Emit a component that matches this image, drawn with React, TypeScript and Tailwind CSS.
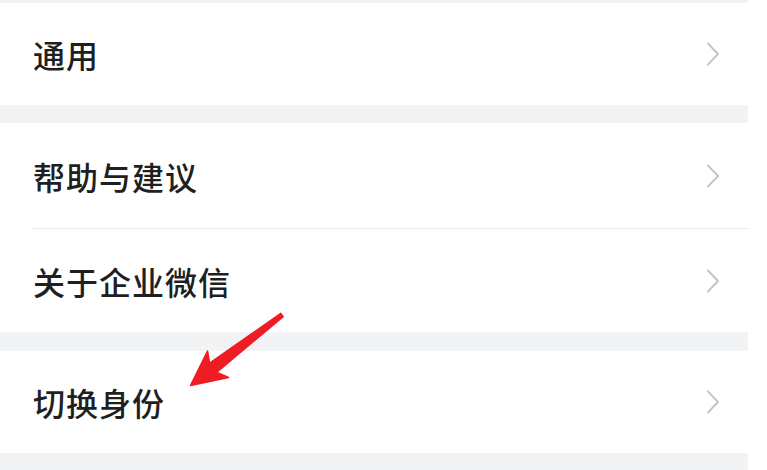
import React from "react";

const font = { fontFamily: '"Noto Sans CJK SC", "Noto Sans", sans-serif' };

function Chevron() {
  return (
    <svg width="14" height="24" viewBox="0 0 14 24" fill="none" className="shrink-0">
      <path d="M2 1.5 L12 12 L2 22.5" stroke="#c6c6c6" strokeWidth="2" strokeLinecap="round" strokeLinejoin="round" />
    </svg>
  );
}

function Row({ label, height, divider }: { label: string; height: string; divider?: boolean }) {
  return (
    <div className={`relative flex items-center justify-between bg-white pl-[33px] pr-[28px] ${height}`}>
      <span className="text-[32px] font-medium leading-none text-[#1f1f1f] tracking-[1px]">{label}</span>
      <Chevron />
      {divider && <div className="absolute bottom-0 left-[32px] right-0 h-px bg-[#ebebeb]" />}
    </div>
  );
}

function Gap({ height }: { height: string }) {
  return <div className={`bg-[#f2f3f5] ${height}`} />;
}

export default function App() {
  return (
    <div className="relative h-[470px] w-[767px] overflow-hidden bg-white" style={font}>
      <div className="flex w-[748px] flex-col">
        <Gap height="h-[3px]" />
        <Row label="通用" height="h-[102px]" />
        <Gap height="h-[18px]" />
        <Row label="帮助与建议" height="h-[106px]" divider />
        <Row label="关于企业微信" height="h-[103px]" />
        <Gap height="h-[19px]" />
        <Row label="切换身份" height="h-[102px]" />
        <Gap height="h-[17px]" />
      </div>
      <svg className="pointer-events-none absolute left-0 top-0" width="767" height="470" viewBox="0 0 767 470">
        <polygon
          points="280.8,313.4 209.6,363.2 207.5,351 190.5,385.5 228.5,377.5 216.6,372.3 283.2,316.6"
          fill="#ee1d24"
          strokeLinejoin="round"
          stroke="#ee1d24"
          strokeWidth="1.5"
        />
      </svg>
    </div>
  );
}
